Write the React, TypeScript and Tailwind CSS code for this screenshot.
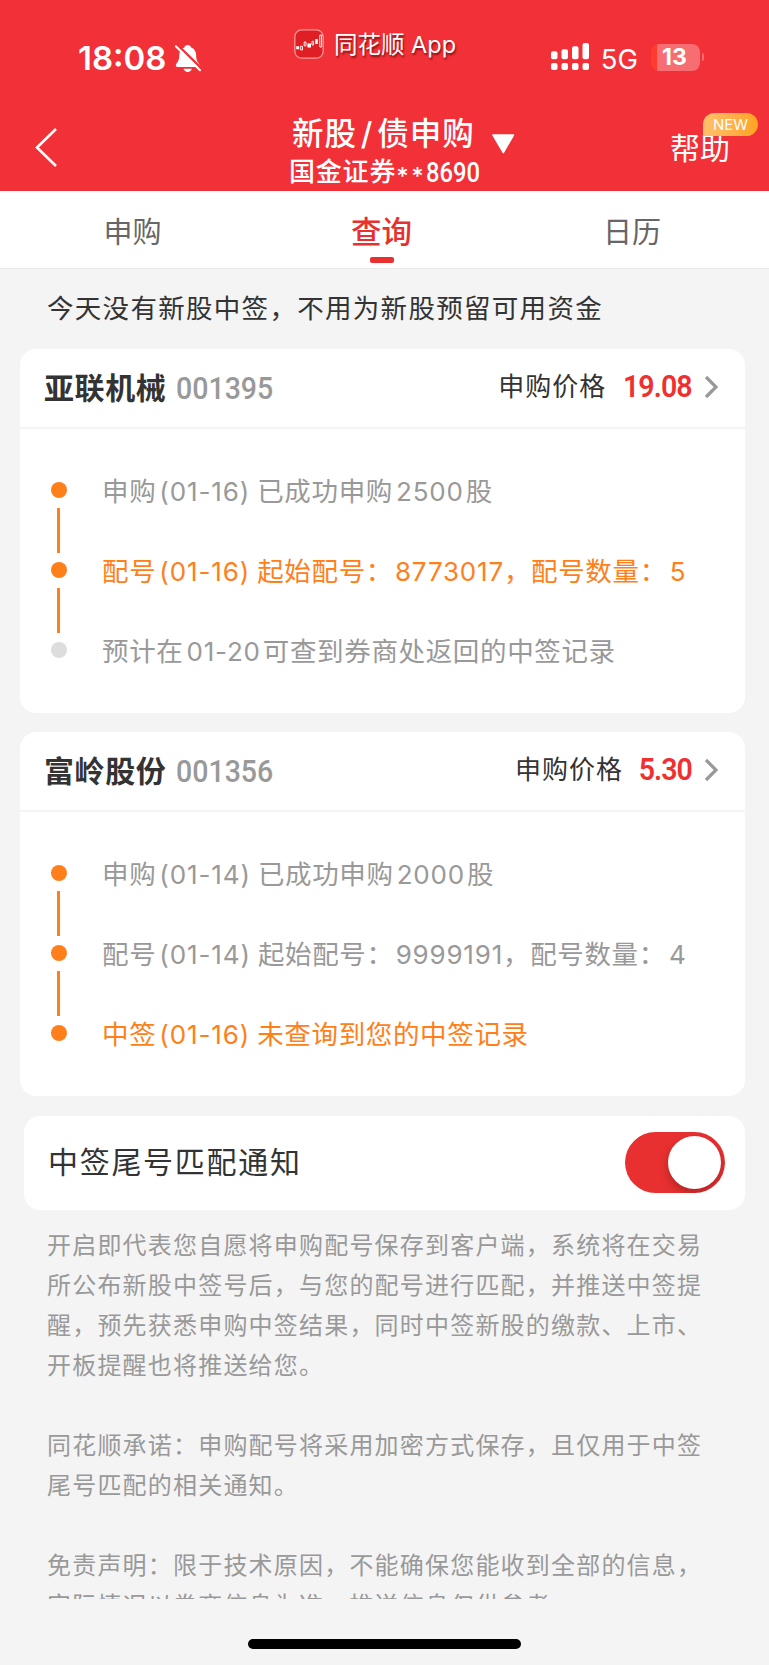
import type { ReactNode } from 'react'

// ---------------------------------------------------------------------------
// Data
// ---------------------------------------------------------------------------

type StepTone = 'done' | 'active' | 'pending'

interface Step {
  tone: StepTone
  parts: string[]
}

interface Stock {
  name: string
  code: string
  price: string
  steps: Step[]
}

const STOCKS: Stock[] = [
  {
    name: '亚联机械',
    code: '001395',
    price: '19.08',
    steps: [
      { tone: 'done', parts: ['申购', '(01-16)', '已成功申购', '2500', '股'] },
      { tone: 'active', parts: ['配号', '(01-16)', '起始配号：', '8773017', '，配号数量：', '5'] },
      { tone: 'pending', parts: ['预计在', '01-20', '可查到券商处返回的中签记录'] },
    ],
  },
  {
    name: '富岭股份',
    code: '001356',
    price: '5.30',
    steps: [
      { tone: 'done', parts: ['申购', '(01-14)', '已成功申购', '2000', '股'] },
      { tone: 'done', parts: ['配号', '(01-14)', '起始配号：', '9999191', '，配号数量：', '4'] },
      { tone: 'active', parts: ['中签', '(01-16)', '未查询到您的中签记录'] },
    ],
  },
]

const NOTES = [
  ['开启即代表您自愿将申购配号保存到客户端，系统将在交易', '所公布新股中签号后，与您的配号进行匹配，并推送中签提', '醒，预先获悉申购中签结果，同时中签新股的缴款、上市、', '开板提醒也将推送给您。'],
  ['同花顺承诺：申购配号将采用加密方式保存，且仅用于中签', '尾号匹配的相关通知。'],
  ['免责声明：限于技术原因，不能确保您能收到全部的信息，', '实际情况以券商信息为准，推送信息仅供参考。'],
]

// ---------------------------------------------------------------------------
// Status bar
// ---------------------------------------------------------------------------

function BellOff() {
  return (
    <svg width="26" height="29" viewBox="0 0 26 29" fill="none">
      <path
        d="M12.7 1c-1.900 0-3 1.100-3.400 2.400C6.200 4.500 4.500 7 4.300 10.600 4.100 15.500 3.700 17 1.500 19.500c-1.300 1.500-.700 3.500 1.200 3.500h20c1.900 0 2.400-2 1.200-3.500-2.200-2.500-2.600-4-2.800-8.900-.200-3.600-1.900-6.100-5-7.200C15.700 2.100 14.600 1 12.700 1Z"
        fill="#fff"
      />
      <path d="M8.500 24.800h8.400c-.5 2-2.200 3.200-4.200 3.200s-3.700-1.200-4.200-3.200Z" fill="#fff" />
      <path d="M1.500 0 26 24" stroke="#f23037" strokeWidth="2.400" />
      <path d="M.8 2.200 25 26.300" stroke="#fff" strokeWidth="2" strokeLinecap="round" />
    </svg>
  )
}

function AppLogo() {
  return (
    <svg width="30" height="30" viewBox="0 0 30 30" fill="none">
      <rect x=".8" y=".8" width="28.400" height="28.400" rx="7" fill="#e01f24" stroke="#f79a9c" strokeWidth="1.300" />
      <path d="M2.200 17.300h3v3h-3zM13.500 14.500H17v4h-3.500zM21.300 10h2.500v5h-2.500z" fill="#fff" />
      <path d="M6.700 17.300h1.800v3.700H6.700zM10.200 13H12v3.800h-1.800zM18 12.300h1.600v3.700H18zM25.800 6h1.800v12h-1.800z" stroke="#fff" strokeWidth=".9" />
    </svg>
  )
}

function Signal() {
  return (
    <svg width="38" height="28" viewBox="0 0 38 28" fill="#fff">
      <rect x="0" y="8.300" width="6.500" height="8" rx="2" />
      <rect x="10.500" y="6.300" width="6.500" height="10" rx="2" />
      <rect x="21" y="3.300" width="6.500" height="13" rx="2" />
      <rect x="31.500" y="0" width="6.500" height="16.300" rx="2" />
      <rect x="0" y="20" width="6.500" height="7" rx="2" />
      <rect x="10.500" y="20" width="6.500" height="7" rx="2" />
      <rect x="21" y="20" width="6.500" height="7" rx="2" />
      <rect x="31.500" y="20" width="6.500" height="7" rx="2" />
    </svg>
  )
}

function StatusBar() {
  return (
    <div className="flex h-[112px] items-start pr-[65px] pl-[78px]">
      <div className="mt-[38px] flex h-10 w-[216px] items-center">
        <span className="text-[33px] leading-10 font-semibold">18:08</span>
        <div className="ml-2">
          <BellOff />
        </div>
      </div>
      <div className="mt-[24px] flex h-10 items-center">
        <AppLogo />
        <span className="mt-[2px] ml-[10px] text-[23.500px] leading-10 [text-shadow:1px_2px_2px_rgba(90,0,0,0.7)]">
          同花顺 App
        </span>
      </div>
      <div className="mt-[37px] ml-auto flex h-10 items-center">
        <Signal />
        <span className="mt-[3px] ml-[12px] text-[27.500px] leading-10">5G</span>
        <div className="ml-[13px] flex h-[27px] w-[49px] items-center overflow-hidden rounded-[8px] bg-linear-to-r from-[#ff3b30] from-12% to-[#f66d72] to-12% pl-[11px] text-[23px] font-bold">
          <span>13</span>
        </div>
        <div className="ml-[2px] h-[8px] w-[2px] rounded-r bg-[#f66d72]" />
      </div>
    </div>
  )
}

// ---------------------------------------------------------------------------
// Header and tabs
// ---------------------------------------------------------------------------

function NavBar() {
  return (
    <div className="flex h-[79px] items-start">
      <div className="w-[289px] pt-4 pl-[35px]">
        <svg width="23" height="39" viewBox="0 0 23 39" fill="none">
          <path d="M21 1 2 19.500 21 38" stroke="#fff" strokeWidth="2.600" />
        </svg>
      </div>
      <div className="w-[192px] whitespace-nowrap">
        <div className="flex h-[42px] items-center pl-[3px]">
          <span className="mt-[2px] text-[31.500px] leading-[42px] font-medium tracking-[0.9px]">
            新股<span className="mx-[4px]">/</span>债申购
          </span>
          <svg className="mt-[22px] ml-[16px] shrink-0" width="24" height="20" viewBox="0 0 24 20">
            <path d="M2 1h20.500L12.300 18.500Z" fill="#fff" stroke="#fff" strokeWidth="1.500" strokeLinejoin="round" />
          </svg>
        </div>
        <div className="flex h-[36px] items-center text-[26px] leading-9 font-medium">
          <span className="tracking-[0.8px]">国金证券</span>
          <span className="mt-[9px] text-[24px] leading-9 tracking-[2.500px]">**</span>
          <span className="mt-[2px] origin-left scale-x-[0.88] font-[Roboto] text-[27px]">8690</span>
        </div>
      </div>
      <div className="relative ml-[189px] pt-[15px] text-[30px] leading-[42px]">
        <span>帮助</span>
        <span className="absolute top-[1px] left-[33px] h-[23px] w-[55px] rounded-full rounded-bl-none bg-linear-to-r from-[#ffc06a] to-[#ffa31f] text-center text-[15px] leading-[24px]">
          NEW
        </span>
      </div>
    </div>
  )
}

function Tabs() {
  return (
    <div className="flex h-[78px] border-b border-[#e8e8e8] bg-white text-[29px] text-[#666]">
      <div className="w-[265px] pt-[21px] text-center leading-[42px]">申购</div>
      <div className="flex w-[233px] flex-col items-center pt-[20px] font-medium text-[#e93030]">
        <span className="text-[30.500px] leading-[42px]">查询</span>
        <div className="mt-[4px] h-[6px] w-6 rounded-[2px] bg-[#e93030]" />
      </div>
      <div className="w-[268px] pt-[21px] text-center leading-[42px]">日历</div>
    </div>
  )
}

// ---------------------------------------------------------------------------
// Subscription cards
// ---------------------------------------------------------------------------

const TEXT_TONE: Record<StepTone, string> = {
  done: 'text-[#999]',
  active: 'text-[#ff801a]',
  pending: 'text-[#999]',
}

function StepText({ parts }: { parts: string[] }) {
  return (
    <>
      {parts.map((part, i) => {
        if (part.startsWith('(')) {
          return <span key={i} className="mr-[7px] ml-[3px] text-[26px] tracking-[0.9px]">{part}</span>
        }
        if (/^\d/.test(part)) {
          // no gap before full-width punctuation
          const tight = parts[i + 1]?.startsWith('，')
          return (
            <span key={i} className={tight ? 'ml-[2px] text-[26px] tracking-[0.8px]' : 'mr-[2px] ml-[3px] text-[26px] tracking-[0.8px]'}>
              {part}
            </span>
          )
        }
        return <span key={i} className="tracking-[0.65px]">{part}</span>
      })}
    </>
  )
}

function StockCard({ stock }: { stock: Stock }) {
  return (
    <section className="h-[363.500px] rounded-[16px] bg-white">
      <div className="flex h-[80px] items-center border-b-2 border-[#f4f4f4] pr-[27px] pl-6 text-[#333]">
        <span className="text-[30px] font-bold tracking-[0.6px]">{stock.name}</span>
        <span className="mt-[3px] ml-[10px] origin-left scale-x-[0.92] font-[Roboto] text-[31px] font-medium text-[#999]">{stock.code}</span>
        <span className="mt-[-3px] ml-auto text-[26px] tracking-[1px]">申购价格</span>
        <span className="mt-[-2px] ml-[11px] origin-right scale-x-[0.92] font-[Roboto] text-[31px] font-semibold tracking-[-1px] text-[#f03030]">
          {stock.price}
        </span>
        <svg className="mt-[-3px] ml-[12px]" width="14" height="24" viewBox="0 0 14 24" fill="none">
          <path d="M2 2l10 10L2 22" stroke="#999" strokeWidth="3.200" />
        </svg>
      </div>
      <ul className="pt-[21px] pl-[31px]">
        {stock.steps.map((step, i) => (
          <li key={i} className="flex h-20 items-center">
            <div className="flex h-20 w-4 flex-col items-center pt-8">
              <div className={step.tone === 'pending' ? 'size-4 shrink-0 rounded-full bg-[#ddd]' : 'size-4 shrink-0 rounded-full bg-[#ff801a]'} />
              {i < stock.steps.length - 1 && <div className="mt-[10px] mr-px h-[45px] w-[3px] shrink-0 bg-[#ff801a]" />}
            </div>
            <div className={`mt-[3px] ml-[35px] text-[26.500px] leading-10 whitespace-nowrap ${TEXT_TONE[step.tone]}`}>
              <StepText parts={step.parts} />
            </div>
          </li>
        ))}
      </ul>
    </section>
  )
}

// ---------------------------------------------------------------------------
// Notification switch and notes
// ---------------------------------------------------------------------------

function Toggle() {
  return (
    <button className="flex h-[61px] w-[100px] items-center justify-end overflow-hidden rounded-full bg-[#e93030] pr-1">
      <span className="size-[53px] rounded-full bg-white shadow-[0_4px_10px_rgba(0,0,0,0.25)]" />
    </button>
  )
}

function Note({ children }: { children: ReactNode }) {
  return <p className="mb-10 text-[24px] leading-[40px] tracking-[1.200px] whitespace-nowrap text-[#999]">{children}</p>
}

export default function App() {
  return (
    <div className="h-[1665px] w-[769px] overflow-hidden bg-[#f4f4f4] font-[Inter,'Noto_Sans_CJK_SC',sans-serif]" lang="zh-CN">
      <header className="h-[191px] bg-[#f23037] text-white">
        <StatusBar />
        <NavBar />
      </header>
      <Tabs />
      <main className="h-[1330px] overflow-hidden">
        <div className="h-[80px] pl-[47px] text-[26.500px] leading-[79px] tracking-[1.300px] text-[#333]">
          今天没有新股中签，不用为新股预留可用资金
        </div>
        <div className="flex flex-col gap-[19.500px] pr-6 pl-5">
          {STOCKS.map((stock) => (
            <StockCard key={stock.code} stock={stock} />
          ))}
          <div className="mt-px ml-1 flex h-[93.500px] items-center justify-between rounded-[16px] bg-white pr-5 pl-6 text-[30px] tracking-[1.700px] text-[#333]">
            <span>中签尾号匹配通知</span>
            <Toggle />
          </div>
        </div>
        <div className="pt-[16px] pl-[47px]">
          {NOTES.map((lines) => (
            <Note key={lines[0]}>
              {lines.map((line) => (
                <span key={line} className="block">{line}</span>
              ))}
            </Note>
          ))}
        </div>
      </main>
      <div className="mx-auto mt-[40px] h-[10px] w-[273px] rounded-full bg-black" />
    </div>
  )
}
